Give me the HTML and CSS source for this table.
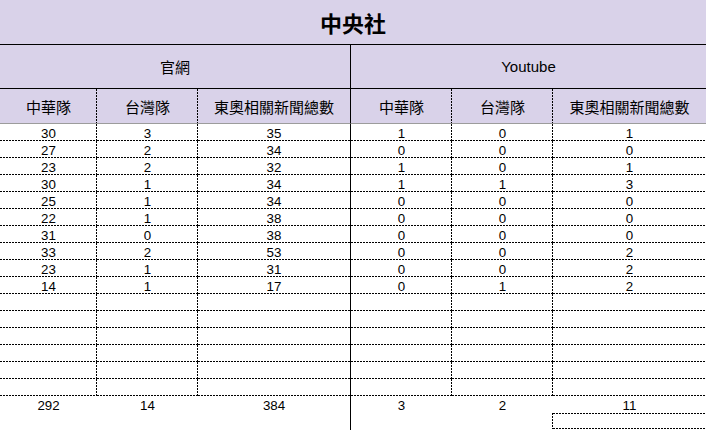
FILE: index.html
```html
<!DOCTYPE html>
<html lang="zh-Hant">
<head>
<meta charset="utf-8">
<title>中央社</title>
<link rel="stylesheet" href="styles.css">
</head>
<body>
<div class="sheet">
  <div class="title">中央社</div>

  <div class="group sr">官網</div>
  <div class="group">Youtube</div>

  <div class="head dr">中華隊</div>
  <div class="head dr">台灣隊</div>
  <div class="head sr">東奧相關新聞總數</div>
  <div class="head dr">中華隊</div>
  <div class="head dr">台灣隊</div>
  <div class="head">東奧相關新聞總數</div>

  <div class="cell dr">30</div><div class="cell dr">3</div><div class="cell sr">35</div><div class="cell dr">1</div><div class="cell dr">0</div><div class="cell">1</div>
  <div class="cell dr">27</div><div class="cell dr">2</div><div class="cell sr">34</div><div class="cell dr">0</div><div class="cell dr">0</div><div class="cell">0</div>
  <div class="cell dr">23</div><div class="cell dr">2</div><div class="cell sr">32</div><div class="cell dr">1</div><div class="cell dr">0</div><div class="cell">1</div>
  <div class="cell dr">30</div><div class="cell dr">1</div><div class="cell sr">34</div><div class="cell dr">1</div><div class="cell dr">1</div><div class="cell">3</div>
  <div class="cell dr">25</div><div class="cell dr">1</div><div class="cell sr">34</div><div class="cell dr">0</div><div class="cell dr">0</div><div class="cell">0</div>
  <div class="cell dr">22</div><div class="cell dr">1</div><div class="cell sr">38</div><div class="cell dr">0</div><div class="cell dr">0</div><div class="cell">0</div>
  <div class="cell dr">31</div><div class="cell dr">0</div><div class="cell sr">38</div><div class="cell dr">0</div><div class="cell dr">0</div><div class="cell">0</div>
  <div class="cell dr">33</div><div class="cell dr">2</div><div class="cell sr">53</div><div class="cell dr">0</div><div class="cell dr">0</div><div class="cell">2</div>
  <div class="cell dr">23</div><div class="cell dr">1</div><div class="cell sr">31</div><div class="cell dr">0</div><div class="cell dr">0</div><div class="cell">2</div>
  <div class="cell dr">14</div><div class="cell dr">1</div><div class="cell sr">17</div><div class="cell dr">0</div><div class="cell dr">1</div><div class="cell">2</div>

  <div class="cell dr"></div><div class="cell dr"></div><div class="cell sr"></div><div class="cell dr"></div><div class="cell dr"></div><div class="cell"></div>
  <div class="cell dr"></div><div class="cell dr"></div><div class="cell sr"></div><div class="cell dr"></div><div class="cell dr"></div><div class="cell"></div>
  <div class="cell dr"></div><div class="cell dr"></div><div class="cell sr"></div><div class="cell dr"></div><div class="cell dr"></div><div class="cell"></div>
  <div class="cell dr"></div><div class="cell dr"></div><div class="cell sr"></div><div class="cell dr"></div><div class="cell dr"></div><div class="cell"></div>
  <div class="cell dr"></div><div class="cell dr"></div><div class="cell sr"></div><div class="cell dr"></div><div class="cell dr"></div><div class="cell"></div>
  <div class="cell dr"></div><div class="cell dr"></div><div class="cell sr"></div><div class="cell dr"></div><div class="cell dr"></div><div class="cell"></div>

  <div class="total">292</div><div class="total">14</div><div class="total sr">384</div><div class="total">3</div><div class="total">2</div><div class="total">11</div>

  <div class="extra"></div><div class="extra"></div><div class="extra sr"></div><div class="extra"></div><div class="extra dr"></div><div class="extra boxed"></div>

  <div class="tail"></div><div class="tail"></div><div class="tail sr"></div><div class="tail"></div><div class="tail"></div><div class="tail"></div>
</div>
</body>
</html>
```

FILE: styles.css
```css
:root {
  --h: repeating-linear-gradient(90deg, #000000 0 2px, transparent 2px 3px);
  --v: repeating-linear-gradient(180deg, #000000 0 2px, transparent 2px 3px);
}

html, body {
  margin: 0;
  padding: 0;
  background: #ffffff;
}

body {
  width: 706px;
  height: 430px;
  overflow: hidden;
  font-family: "Liberation Sans", "Noto Sans CJK TC", Arial, sans-serif;
  color: #000000;
}

.sheet {
  display: grid;
  grid-template-columns: 97px 101px 153px 101px 101px 153px;
  width: 706px;
}

.sheet > div {
  box-sizing: border-box;
  display: flex;
  align-items: center;
  justify-content: center;
  white-space: nowrap;
  background-repeat: no-repeat;
}

.title {
  grid-column: 1 / -1;
  height: 45px;
  background-color: #d9d2e9;
  border-bottom: 1px solid #000000;
  font-family: "Noto Sans CJK TC", "Liberation Sans", sans-serif;
  font-weight: bold;
  font-size: 22px;
}

.group {
  grid-column: span 3;
  height: 44px;
  background-color: #d9d2e9;
  border-bottom: 1px solid #000000;
  font-family: "Liberation Sans", "Noto Sans CJK TC", sans-serif;
  font-size: 15px;
}

.head {
  height: 35px;
  background-color: #d9d2e9;
  border-bottom: 1px solid #9c9c9c;
  font-family: "Noto Sans CJK TC", "Liberation Sans", sans-serif;
  font-size: 15px;
}

.cell {
  height: 17px;
  font-size: 13.33px;
  padding-top: 1px;
  background-image: var(--h);
  background-position: left bottom;
  background-size: 100% 1px;
}

.total {
  height: 17px;
  font-size: 13.33px;
  padding-top: 1px;
}

.extra {
  height: 16px;
}

.tail {
  height: 4px;
}

.sr {
  border-right: 1px solid #000000;
}

.head.dr,
.extra.dr {
  background-image: var(--v);
  background-position: right top;
  background-size: 1px 100%;
}

.cell.dr {
  background-image: var(--h), var(--v);
  background-position: left bottom, right top;
  background-size: 100% 1px, 1px 100%;
}

.boxed {
  background-image: var(--h), var(--h);
  background-position: left top, left bottom;
  background-size: 100% 1px, 100% 1px;
}
```
